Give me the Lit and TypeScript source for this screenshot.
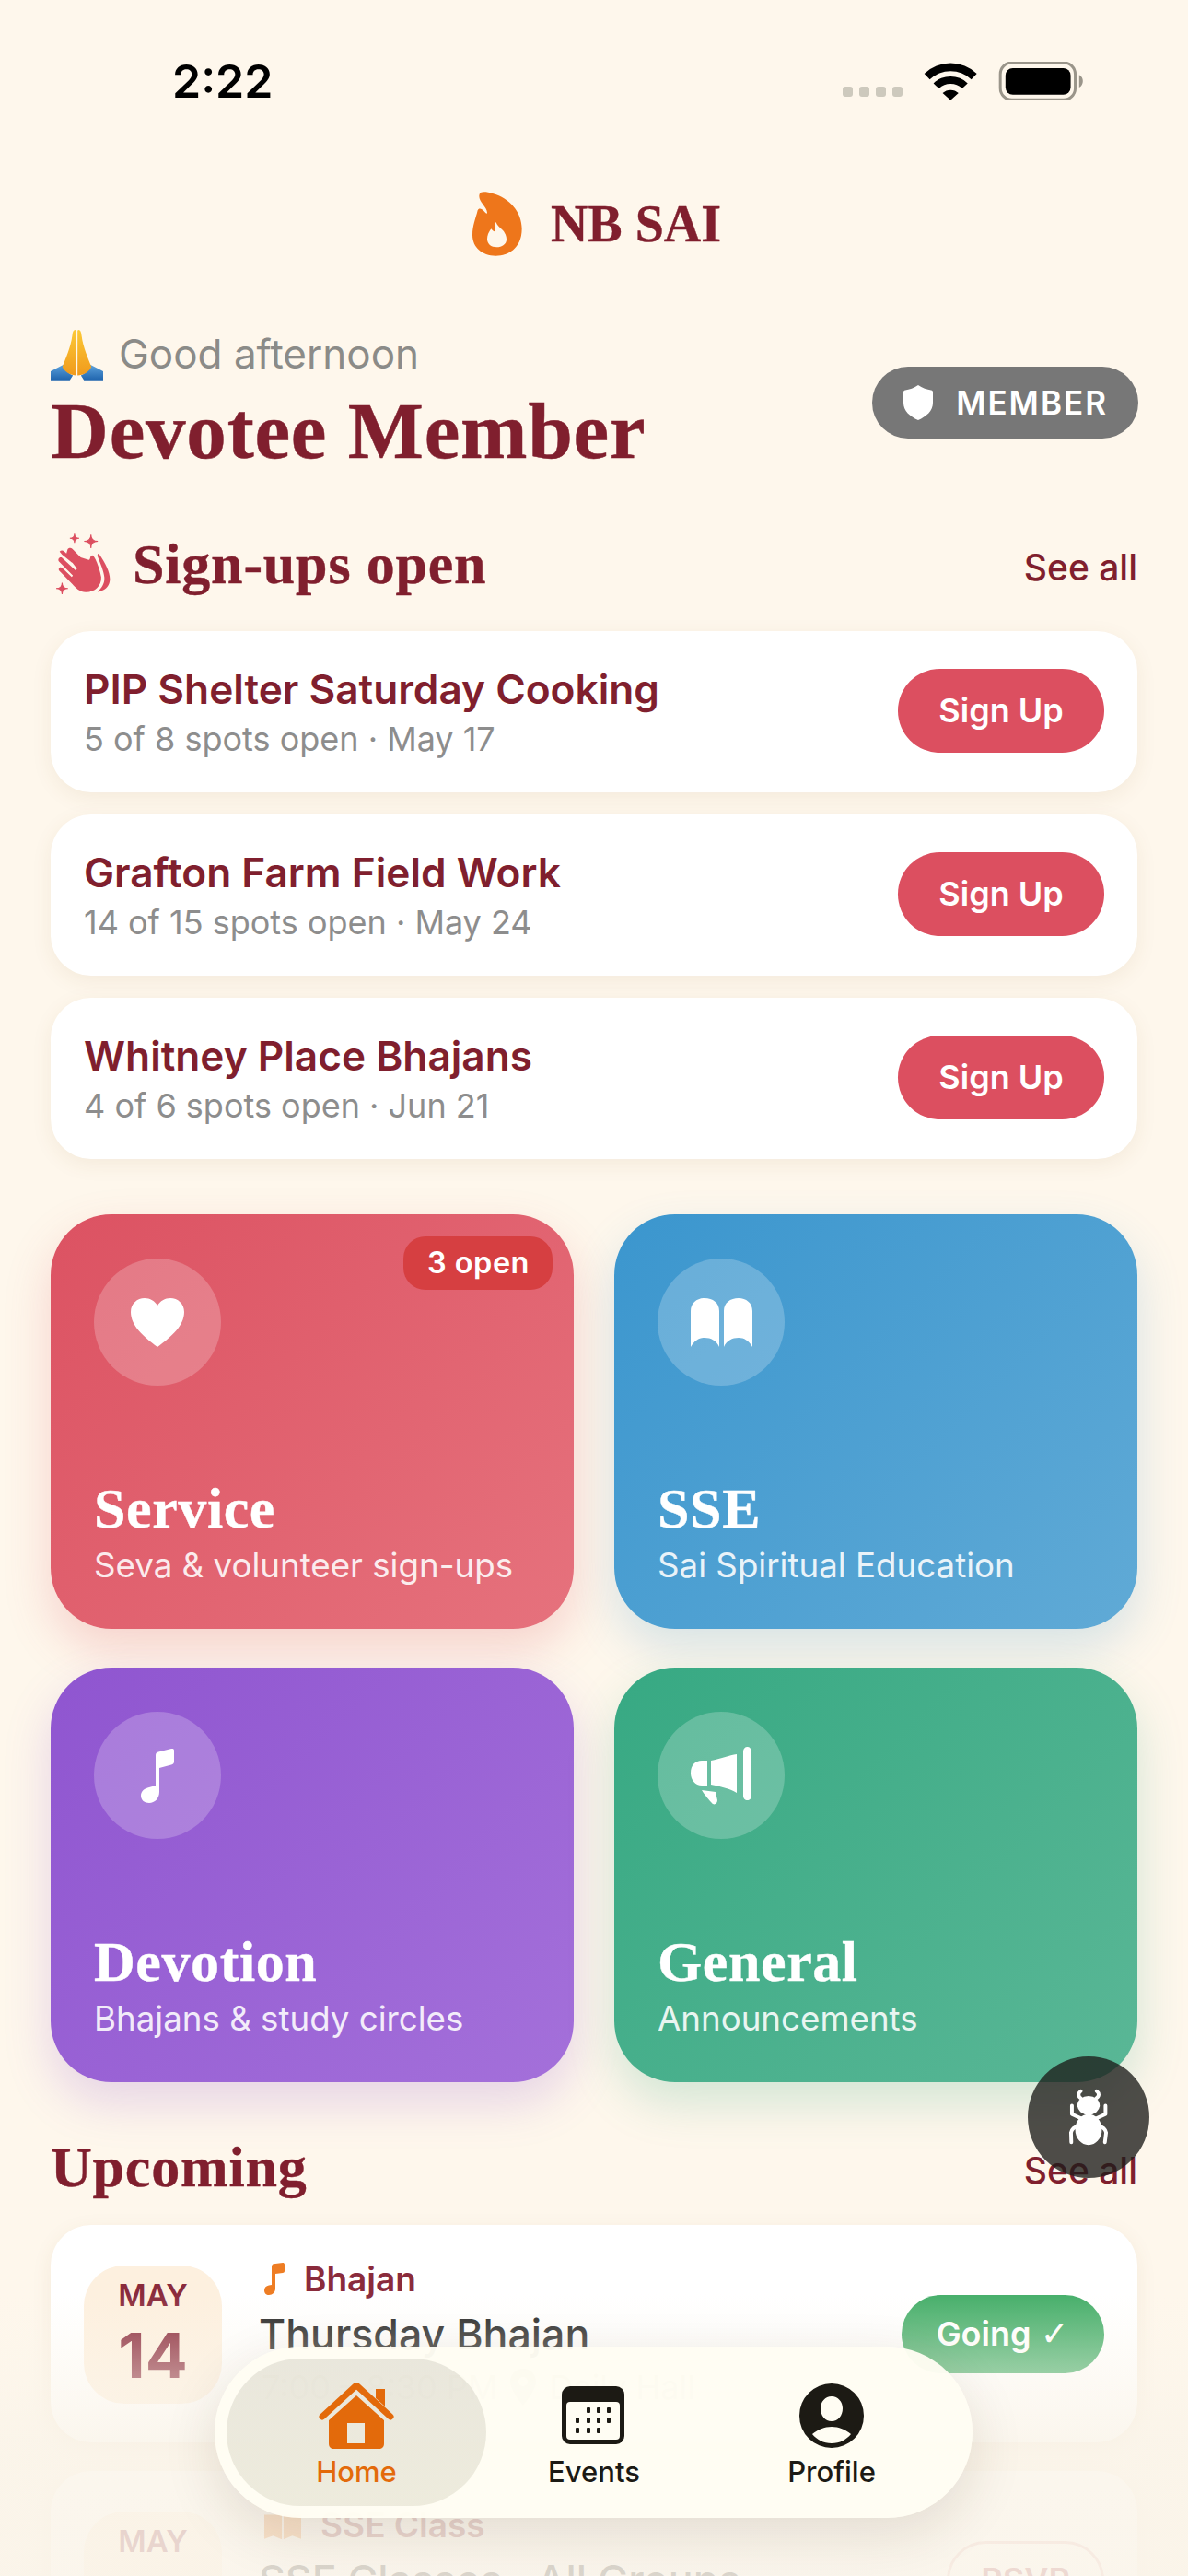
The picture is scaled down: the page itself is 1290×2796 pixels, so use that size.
import { LitElement, css, html, svg } from 'lit';
import { customElement } from 'lit/decorators.js';

const SANS = css`Inter, 'Noto Sans', sans-serif`;
const SERIF = css`'Liberation Serif', serif`;

const sparkle = (x: number, y: number, r: number) =>
   svg`<path d="M${x} ${y - r}Q${x} ${y} ${x + r} ${y}Q${x} ${y} ${x} ${y + r}Q${x} ${y} ${x - r} ${y}Q${x} ${y} ${x} ${y - r}Z" stroke="#dc4f60" stroke-width="3"/>`;

const ICONS = {
   heart: html`<svg width="58" height="53" viewBox="0 0 58 53"><path fill="#fff" d="M29 53C14 42 0 30 0 15C0 6 7 0 15 0C21 0 26 3 29 8C32 3 37 0 43 0C51 0 58 6 58 15C58 30 44 42 29 53Z"/></svg>`,
   book: html`<svg width="67" height="53" viewBox="0 0 67 53"><path fill="#fff" d="M0 14C0 5 7 0 15 0C24 0 31 5 31 14V53C28 46 22 43 15 43C9 43 4 46 0 53ZM67 14C67 5 60 0 52 0C43 0 36 5 36 14V53C39 46 45 43 52 43C58 43 63 46 67 53Z"/></svg>`,
   note: html`<svg width="36" height="59" viewBox="0 0 36 59"><path fill="#fff" d="M16 7C16 5 17 4 19 3.500L33 0C35 -.4 36 .6 36 2V14C36 16 35 17 33 17.500L20 21V47C20 54 15 59 9 59C4 59 0 56 0 51C0 46 4 43 9 42L16 40Z"/></svg>`,
   horn: html`<svg width="66" height="63" viewBox="0 0 66 63"><path fill="#fff" d="M57 5C57 2 59 0 61.500 0C64 0 66 2 66 5V53C66 56 64 58 61.500 58C59 58 57 56 57 53ZM22 15C32 13 42 9 50 8V50C42 45 32 43 22 41ZM18 15V42H12C5 42 0 36 0 28.500C0 20 5 15 12 15ZM12 47L27 49L29 58C29 62 25 64 23 61C20 58 15 52 12 47Z"/></svg>`,
};

const SIGNUPS = [
   { name: 'PIP Shelter Saturday Cooking', info: '5 of 8 spots open · May 17' },
   { name: 'Grafton Farm Field Work', info: '14 of 15 spots open · May 24' },
   { name: 'Whitney Place Bhajans', info: '4 of 6 spots open · Jun 21' },
];

const TILES = [
   { cls: 'red', title: 'Service', sub: 'Seva & volunteer sign-ups', icon: ICONS.heart, badge: '3 open' },
   { cls: 'blue', title: 'SSE', sub: 'Sai Spiritual Education', icon: ICONS.book, badge: '' },
   { cls: 'purple', title: 'Devotion', sub: 'Bhajans & study circles', icon: ICONS.note, badge: '' },
   { cls: 'green', title: 'General', sub: 'Announcements', icon: ICONS.horn, badge: '' },
];

@customElement('app-root')
export class AppRoot extends LitElement {
   static styles = css`
      :host {
         display: block;
         position: relative;
         width: 1290px;
         height: 2796px;
         overflow: hidden;
         background: #fef7ec;
         font-family: ${SANS};
      }
      svg {
         display: block;
         flex: none;
      }
      .status {
         display: flex;
         align-items: center;
         height: 50px;
         padding: 63px 113px 0 187px;
      }
      .time {
         flex: 1;
         font-size: 50px;
         font-weight: 600;
         line-height: 50px;
         color: #000;
      }
      .dots {
         display: flex;
         gap: 7px;
         margin: 22px 23px 0 0;
      }
      .dots i {
         width: 11px;
         height: 11px;
         border-radius: 3px;
         background: #cdc9bd;
      }
      .wifi {
         margin-right: 23px;
      }
      .logo {
         display: flex;
         justify-content: center;
         align-items: center;
         gap: 31px;
         height: 70px;
         margin: 95px 0 0 6px;
         font: bold 56px/70px ${SERIF};
         -webkit-text-stroke: 0.4px #801f2e;
         color: #801f2e;
      }
      .content {
         padding: 79px 55px 0;
      }
      .hello {
         display: flex;
         align-items: center;
         justify-content: space-between;
      }
      .greet {
         display: flex;
         align-items: center;
         gap: 17px;
         height: 56px;
         font-size: 44px;
         color: #8b8b88;
      }
      .greet span {
         margin-top: -3px;
      }
      .name {
         margin-top: 10px;
         font: bold 87px/90px ${SERIF};
         letter-spacing: 0.800px;
         -webkit-text-stroke: 0.5px #801f2e;
         color: #801f2e;
      }
      .member {
         display: flex;
         align-items: center;
         gap: 25px;
         height: 78px;
         margin: 3px -1px 0 0;
         padding: 0 33px 0 34px;
         border-radius: 39px;
         background: #777;
         color: #fff;
         font-size: 35px;
         font-weight: 600;
         letter-spacing: 2px;
      }
      .head {
         display: flex;
         align-items: center;
         justify-content: space-between;
         margin-top: 64px;
         height: 70px;
      }
      .head.up {
         margin-top: 57px;
      }
      .head h2 {
         display: flex;
         align-items: center;
         gap: 24px;
         margin: 0;
         font: bold 62px/70px ${SERIF};
         letter-spacing: 0.800px;
         -webkit-text-stroke: 0.4px #801f2e;
         color: #801f2e;
      }
      .head svg {
         margin-left: 5px;
      }
      .all {
         margin-top: 6px;
         font-size: 39px;
         font-weight: 500;
         color: #801f2e;
      }
      .list {
         display: flex;
         flex-direction: column;
         gap: 24px;
         margin-top: 38px;
      }
      .card {
         display: flex;
         align-items: center;
         justify-content: space-between;
         height: 175px;
         padding: 0 36px;
         border-radius: 44px;
         background: #fff;
         box-shadow: 0 6px 22px rgba(130, 90, 40, 0.08);
         box-sizing: border-box;
      }
      .card b {
         display: block;
         font-size: 44.200px;
         font-weight: 600;
         line-height: 54px;
         color: #801f2e;
      }
      .card span {
         display: block;
         margin-top: 5px;
         font-size: 36px;
         line-height: 44px;
         color: #8d8d8d;
      }
      .signup {
         width: 224px;
         height: 91px;
         margin-top: -3px;
         border: 0;
         border-radius: 46px;
         background: #dc4f60;
         color: #fff;
         font: 600 36px ${SANS};
      }
      .grid {
         display: grid;
         grid-template-columns: 1fr 1fr;
         gap: 42px 44px;
         margin-top: 60px;
      }
      .tile {
         position: relative;
         display: flex;
         flex-direction: column;
         justify-content: space-between;
         height: 450px;
         padding: 48px 47px 47px;
         border-radius: 66px;
         box-sizing: border-box;
         color: #fff;
      }
      .red {
         background: linear-gradient(135deg, #dc5262, #e6727d);
         box-shadow: 0 22px 50px rgba(220, 80, 95, 0.22);
      }
      .blue {
         background: linear-gradient(135deg, #3b96ce, #60aad6);
         box-shadow: 0 22px 50px rgba(60, 150, 205, 0.2);
      }
      .purple {
         background: linear-gradient(135deg, #8f55d0, #a470da);
         box-shadow: 0 22px 50px rgba(145, 85, 210, 0.22);
      }
      .green {
         background: linear-gradient(135deg, #37a983, #5ab796);
         box-shadow: 0 22px 50px rgba(55, 170, 130, 0.22);
      }
      .disc {
         display: flex;
         align-items: center;
         justify-content: center;
         width: 138px;
         height: 138px;
         border-radius: 50%;
         background: rgba(255, 255, 255, 0.22);
      }
      .badge {
         position: absolute;
         top: 24px;
         right: 23px;
         padding: 0 25px 0 26px;
         border-radius: 24px;
         background: #d63f41;
         font-size: 32.500px;
         font-weight: 600;
         line-height: 58px;
         letter-spacing: 0.500px;
      }
      .tile h3 {
         margin: 0;
         font: bold 62px/70px ${SERIF};
         letter-spacing: 0.600px;
         -webkit-text-stroke: 0.4px #fff;
      }
      .tile p {
         margin: 5px 0 0;
         font-size: 36.700px;
         line-height: 44px;
         opacity: 0.88;
      }
      .event {
         display: flex;
         align-items: flex-start;
         gap: 43px;
         height: 236px;
         margin-top: 28px;
         padding: 44px 36px;
         border-radius: 44px;
         background: #fff;
         box-shadow: 0 6px 22px rgba(130, 90, 40, 0.08);
         box-sizing: border-box;
      }
      .event + .event {
         margin-top: 31px;
      }
      .date {
         flex: none;
         width: 150px;
         height: 150px;
         border-radius: 44px;
         background: #fdf0df;
         text-align: center;
         color: #8a2b3c;
      }
      .date small {
         display: block;
         padding-top: 12px;
         font-size: 33px;
         font-weight: 600;
         line-height: 40px;
      }
      .date strong {
         display: block;
         margin-top: 7px;
         font-size: 68px;
         font-weight: 700;
         line-height: 76px;
      }
      .body {
         flex: 1;
         margin-top: -9px;
      }
      .kind {
         display: flex;
         align-items: center;
         gap: 21px;
         height: 46px;
         font-size: 37px;
         font-weight: 600;
         color: #8a2b3c;
      }
      .kind svg {
         margin-left: 3px;
      }
      .title {
         margin: 11px 0 0 -3px;
         font-size: 44.700px;
         font-weight: 500;
         line-height: 54px;
         color: #222;
      }
      .meta {
         display: flex;
         align-items: center;
         gap: 14px;
         margin-top: 8px;
         font-size: 36px;
         line-height: 44px;
         color: #8d8d8d;
      }
      .going,
      .rsvp {
         flex: none;
         align-self: center;
         display: flex;
         align-items: center;
         justify-content: center;
         height: 85px;
         border-radius: 43px;
         box-sizing: border-box;
         font-size: 36px;
         font-weight: 600;
      }
      .going {
         gap: 10px;
         width: 220px;
         background: #47af6b;
         color: #fff;
      }
      .check {
         font-family: 'DejaVu Sans', sans-serif;
         font-size: 38px;
         font-weight: 400;
      }
      .rsvp {
         width: 171px;
         border: 3px solid #e7b9ba;
         color: #a33a48;
      }
      .fade {
         position: absolute;
         left: 0;
         right: 0;
         bottom: 0;
         height: 306px;
         background: linear-gradient(
            to bottom,
            rgba(251, 245, 234, 0) 0%,
            rgba(251, 245, 234, 0.45) 28%,
            rgba(250, 244, 233, 0.8) 52%,
            rgba(250, 244, 233, 0.86) 100%
         );
      }
      .fab {
         position: absolute;
         left: 1116px;
         top: 2232px;
         display: flex;
         align-items: center;
         justify-content: center;
         width: 132px;
         height: 132px;
         border-radius: 50%;
         background: rgba(28, 28, 26, 0.78);
      }
      .nav {
         position: absolute;
         left: 233px;
         top: 2547px;
         display: grid;
         grid-template-columns: 282px 234px 282px;
         width: 823px;
         height: 186px;
         padding: 13px;
         border-radius: 93px;
         box-sizing: border-box;
         background: rgba(255, 253, 243, 0.96);
         box-shadow: 0 18px 60px rgba(60, 45, 20, 0.12);
      }
      .tab {
         display: flex;
         flex-direction: column;
         align-items: center;
         justify-content: flex-end;
         padding-bottom: 18px;
         border-radius: 80px;
         font-size: 31px;
         font-weight: 500;
         line-height: 38px;
         color: #1c1a14;
      }
      .tab svg {
         margin-bottom: 6px;
      }
      .tab svg.cal {
         margin: 0 2px 11px 0;
      }
      .tab svg.me {
         margin-bottom: 7px;
      }
      .tab.on {
         background: linear-gradient(to bottom, rgba(110, 105, 90, 0.15), rgba(120, 115, 70, 0.13));
         color: #e36a0b;
      }
   `;

   render() {
      return html`
         <div class="status">
            <div class="time">2:22</div>
            <div class="dots"><i></i><i></i><i></i><i></i></div>
            <svg class="wifi" width="58" height="42" viewBox="310 75 175 125"><path d="M312 113A125 125 0 0 1 484 113L466 132A100 100 0 0 0 330 132ZM342 145A80 80 0 0 1 454 145L436 162A55 55 0 0 0 360 162ZM372 177A38 38 0 0 1 424 177L398 200Z"/></svg>
            <svg width="93" height="42" viewBox="550 75 280 127"><rect x="556" y="78" width="246" height="122" rx="38" fill="none" stroke="#9a958a" stroke-width="9"/><rect x="573" y="96" width="214" height="87" rx="24"/><path d="M815 118C830 125 832 150 815 160Z" fill="#9a958a"/></svg>
         </div>

         <div class="logo">
            <svg width="54" height="70" viewBox="159 114 162 210"><path fill="#ee761b" fill-rule="evenodd" d="M182 122C185 112 205 114 225 120C280 135 320 180 320 235C320 290 285 323 235 323C190 323 159 295 159 255C159 225 170 200 176 175C180 165 190 170 197 178C203 185 207 188 207 182C205 160 175 145 182 122ZM235 212C240 225 250 232 258 240C268 252 270 262 270 270C270 285 255 295 238 295C220 295 207 285 207 268C207 255 213 245 220 235C224 240 230 248 233 240C235 232 232 222 235 212Z"/></svg>
            <span>NB SAI</span>
         </div>

         <div class="content">
            <div class="hello">
               <div>
                  <div class="greet">
                     <svg width="57" height="56" viewBox="80 50 170 166">
                        <defs>
                           <linearGradient id="pray" x1="0" y1="0" x2="0" y2="1"><stop offset="0" stop-color="#fcc936"/><stop offset="1" stop-color="#f09a1c"/></linearGradient>
                           <linearGradient id="sleeve" x1="0" y1="0" x2="0" y2="1"><stop offset="0" stop-color="#5da3dd"/><stop offset="1" stop-color="#1f64ad"/></linearGradient>
                        </defs>
                        <path fill="url(#sleeve)" d="M80 187L122 165C128 185 140 195 152 200L142 216H80ZM250 187L208 165C202 185 190 195 178 200L188 216H250Z"/>
                        <path fill="url(#pray)" d="M163 200C145 200 125 190 118 172C128 145 145 110 150 70C151 55 158 48 163 55ZM167 200C185 200 205 190 212 172C202 145 185 110 180 70C179 55 172 48 167 55Z"/>
                     </svg>
                     <span>Good afternoon</span>
                  </div>
                  <div class="name">Devotee Member</div>
               </div>
               <div class="member">
                  <svg width="32" height="38" viewBox="0 0 32 38"><path fill="#fff" d="M16 0C20 3 26 5 30 5.500C31.500 5.800 32 6.500 32 8V19C32 28 25 34 16 38C7 34 0 28 0 19V8C0 6.500 .5 5.800 2 5.500C6 5 12 3 16 0Z"/></svg>
                  MEMBER
               </div>
            </div>

            <div class="head">
               <h2>
                  <svg width="60" height="66" viewBox="90 725 178 195" fill="#dc4f60">
                     ${sparkle(205, 750, 22)}${sparkle(152, 740, 15)}${sparkle(112, 902, 19)}
                     <path d="M232 792C255 825 272 860 264 885C258 902 245 910 226 913C240 900 250 885 248 865C246 845 235 820 226 797C226 790 229 788 232 792Z"/>
                     <path d="M104 783C108 778 114 778 118 782L150 812L144 819L112 793ZM130 775C134 770 141 770 145 774L172 802L198 810C205 808 200 795 210 795C220 800 235 845 238 865C240 895 215 915 188 914C170 914 155 900 145 888L103 845C98 838 105 830 112 835L143 865L147 860L102 815C96 807 105 798 112 803L155 843L160 838L125 793Z"/>
                  </svg>
                  Sign-ups open
               </h2>
               <span class="all">See all</span>
            </div>

            <div class="list">
               ${SIGNUPS.map(
                  (s) => html`<div class="card">
                     <div><b>${s.name}</b><span>${s.info}</span></div>
                     <button class="signup">Sign Up</button>
                  </div>`
               )}
            </div>

            <div class="grid">
               ${TILES.map(
                  (t) => html`<div class="tile ${t.cls}">
                     <div class="disc">${t.icon}</div>
                     ${t.badge ? html`<div class="badge">${t.badge}</div>` : ''}
                     <div>
                        <h3>${t.title}</h3>
                        <p>${t.sub}</p>
                     </div>
                  </div>`
               )}
            </div>

            <div class="head up">
               <h2>Upcoming</h2>
               <span class="all">See all</span>
            </div>

            <div class="event">
               <div class="date"><small>MAY</small><strong>14</strong></div>
               <div class="body">
                  <div class="kind">
                     <svg width="22" height="35" viewBox="0 0 22 35"><path fill="#ee7d24" d="M8 4C8 2.500 9 1.500 10 1.200L20 0C21 0 22 .5 22 2V9C22 10 21 11 20 11L12 12V28C12 32 9 35 5 35C2 35 0 33 0 30C0 27 2 25 5 24.500L8 24Z"/></svg>
                     Bhajan
                  </div>
                  <div class="title">Thursday Bhajan</div>
                  <div class="meta">
                     <span>7:00 – 8:30 PM</span>
                     <svg width="28" height="40" viewBox="0 0 28 40"><path fill="#8d8d8d" d="M14 0C6 0 0 6 0 14C0 24 14 40 14 40C14 40 28 24 28 14C28 6 22 0 14 0ZM14 19A5 5 0 1 1 14 9A5 5 0 0 1 14 19Z"/></svg>
                     <span>Daily Hall</span>
                  </div>
               </div>
               <div class="going">Going <span class="check">✓</span></div>
            </div>

            <div class="event">
               <div class="date"><small>MAY</small><strong>17</strong></div>
               <div class="body">
                  <div class="kind">
                     <svg width="40" height="35" viewBox="0 0 67 53"><path fill="#ee7d24" d="M0 8H32V53L16 46L0 52ZM67 8H35V53L51 46L67 52Z"/></svg>
                     SSE Class
                  </div>
                  <div class="title">SSE Classes · All Groups</div>
               </div>
               <div class="rsvp">RSVP</div>
            </div>
         </div>

         <div class="fade"></div>

         <div class="fab">
            <svg width="44" height="62" viewBox="238 170 134 188" fill="#fff">
               <ellipse cx="305" cy="305" rx="44" ry="51"/>
               <ellipse cx="305" cy="225" rx="37" ry="31"/>
               <g fill="none" stroke="#fff" stroke-width="12" stroke-linecap="round" stroke-linejoin="round">
                  <path d="M280 202C270 195 270 185 279 178M330 202C341 195 341 185 332 178"/>
                  <path d="M250 226V254L285 270M361 226V254L326 270"/>
                  <path d="M248 347L247 315C249 303 262 295 276 292M359 347L363 315C361 303 348 295 334 292"/>
               </g>
            </svg>
         </div>

         <div class="nav">
            <div class="tab on">
               <svg width="82" height="72" viewBox="0 0 82 72"><path fill="#e36a0b" d="M62 7H72V26L62 17Z"/><path d="M4 37L41 3L78 37" fill="none" stroke="#e36a0b" stroke-width="7" stroke-linecap="round" stroke-linejoin="round"/><path fill="#e36a0b" fill-rule="evenodd" d="M41 14L71 41V66C71 70 69 72 65 72H17C13 72 11 70 11 66V41ZM31 44V66H50V44Z"/></svg>
               Home
            </div>
            <div class="tab">
               <svg class="cal" width="68" height="63" viewBox="0 0 68 63">
                  <rect width="68" height="63" rx="9" fill="#1c1a14"/>
                  <rect x="5" y="17" width="58" height="41" rx="4" fill="#fffdf3"/>
                  <g fill="#1c1a14">
                     ${[29, 40, 51].map((x) => svg`<rect x=${x - 2} y="23" width="4" height="6" rx="1"/>`)}
                     ${[17, 29, 40, 51].map((x) => svg`<rect x=${x - 2} y="34" width="4" height="6" rx="1"/>`)}
                     ${[17, 29, 40].map((x) => svg`<rect x=${x - 2} y="45" width="4" height="6" rx="1"/>`)}
                  </g>
               </svg>
               Events
            </div>
            <div class="tab">
               <svg class="me" width="70" height="70" viewBox="0 0 70 70"><path fill="#1c1a14" fill-rule="evenodd" d="M35 0A35 35 0 1 0 35 70A35 35 0 1 0 35 0ZM35 14C42 14 47 20 47 27C47 35 42 41 35 41C28 41 23 35 23 27C23 20 28 14 35 14ZM14 55C20 50 27 47 35 47C43 47 50 50 56 55C51 61 44 65 35 65C26 65 19 61 14 55Z"/></svg>
               Profile
            </div>
         </div>
      `;
   }
}
